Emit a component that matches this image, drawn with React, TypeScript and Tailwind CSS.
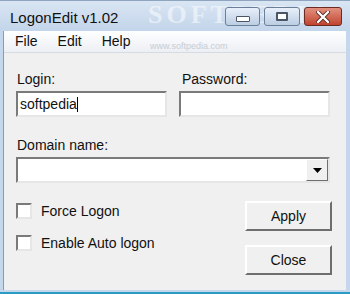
const sunken =
  "border-2 border-t-[#7a7a7a] border-l-[#7a7a7a] border-r-[#e6e6e6] border-b-[#e6e6e6] bg-white";
const raised =
  "border-2 border-t-[#ffffff] border-l-[#ffffff] border-r-[#6e6e6e] border-b-[#6e6e6e] bg-[#f0f0f0]";

const Checkbox = ({ label }: { label: string }) => (
  <div className="flex items-center gap-[9px] h-[16px]">
    <div className={`w-[16px] h-[16px] ${sunken} bg-[#f7f7f7]`} />
    <span>{label}</span>
  </div>
);

const Button = ({ label }: { label: string }) => (
  <div className={`w-[87px] h-[30px] flex items-center justify-center ${raised}`}>
    {label}
  </div>
);

export default function App() {
  return (
    <div
      className="relative w-[350px] h-[294px] overflow-hidden flex flex-col bg-[#c5d7ec] text-[14px] text-[#111]"
      style={{ fontFamily: '"Liberation Sans", Arial, sans-serif' }}
    >
      {/* title bar */}
      <div className="relative h-[31px] flex items-start bg-gradient-to-b from-[#d9e5f3] to-[#c3d5ea] border-t border-[#8fa5bf]">
        <span
          className="absolute left-[148px] top-[0px] text-[26px] leading-[28px] tracking-[4px] text-white/50 font-bold"
          style={{ fontFamily: '"Liberation Serif", serif' }}
        >
          SOFTPEDIA
        </span>
        <span className="relative mt-[6px] ml-[10px] text-[15px] text-[#111]">LogonEdit v1.02</span>
        <div className="relative ml-auto mr-[8px] mt-[6px] flex gap-[4px]">
          <div className="w-[35px] h-[19px] rounded-[3px] border border-[#6c7f98] bg-gradient-to-b from-[#e8f0fa] to-[#bccde3] flex items-center justify-center">
            <div className="w-[14px] h-[6px] mt-[5px] bg-white border border-[#4a5566] rounded-[1px]" />
          </div>
          <div className="w-[36px] h-[19px] rounded-[3px] border border-[#6c7f98] bg-gradient-to-b from-[#e8f0fa] to-[#bccde3] flex items-center justify-center">
            <div className="w-[12px] h-[9px] border-[2px] border-[#4a5566] bg-white rounded-[1px]" />
          </div>
          <div className="w-[38px] h-[19px] rounded-[3px] border border-[#6b2a22] bg-gradient-to-b from-[#e2907f] to-[#c0422e] flex items-center justify-center">
            <svg width="14" height="12" viewBox="0 0 14 12">
              <path d="M2 1 L12 11 M12 1 L2 11" stroke="#5a2a22" strokeWidth="4" strokeLinecap="round" />
              <path d="M2 1 L12 11 M12 1 L2 11" stroke="#ffffff" strokeWidth="2.4" strokeLinecap="round" />
            </svg>
          </div>
        </div>
      </div>

      {/* body between frames */}
      <div className="flex-1 flex ml-[3px] mr-[4px] border-l border-[#8a9ab0]">
        <div className="flex-1 flex flex-col bg-[#f0f0f0]">
          {/* menu bar */}
          <div className="relative h-[22px] flex items-center bg-gradient-to-b from-[#ffffff] to-[#eceff4] border-b border-[#d7dce4] pl-[1px]">
            <span className="px-[10px]">File</span>
            <span className="px-[10px]">Edit</span>
            <span className="px-[10px]">Help</span>
            <span className="absolute left-[146px] top-[9px] text-[9px] text-[#c8ccd4]">www.softpedia.com</span>
          </div>

          {/* client */}
          <div className="flex-1 flex flex-col pl-[12px] pr-[14px] pt-[18px]">
            <div className="flex gap-[12px]">
              <div className="flex flex-col gap-[4px]">
                <span className="h-[16px] leading-[16px] ml-[1px]">Login:</span>
                <div className={`w-[151px] h-[26px] ${sunken} flex items-center pl-[2px]`}>
                  <span>softpedia</span>
                  <span className="w-[1px] h-[15px] bg-black" />
                </div>
              </div>
              <div className="flex flex-col gap-[4px]">
                <span className="h-[16px] leading-[16px] ml-[3px]">Password:</span>
                <div className={`w-[151px] h-[26px] ${sunken}`} />
              </div>
            </div>

            <span className="h-[16px] leading-[16px] ml-[1px] mt-[20px]">Domain name:</span>
            <div className={`mt-[4px] w-[314px] h-[26px] ${sunken} flex justify-end`}>
              <div className="w-[22px] h-full border border-t-white border-l-white border-r-[#6e6e6e] border-b-[#6e6e6e] bg-[#f0f0f0] flex items-center justify-center">
                <svg width="9" height="5" viewBox="0 0 9 5">
                  <path d="M0 0 H9 L4.5 5 Z" fill="#000" />
                </svg>
              </div>
            </div>

            <div className="flex">
              <div className="flex flex-col gap-[16px] mt-[20px]">
                <Checkbox label="Force Logon" />
                <Checkbox label="Enable Auto logon" />
              </div>
              <div className="ml-auto flex flex-col gap-[14px] mt-[18px]">
                <Button label="Apply" />
                <Button label="Close" />
              </div>
            </div>
          </div>
        </div>
      </div>

      {/* bottom frame */}
      <div className="h-[4px] bg-[#c5d7ec] border-b-2 border-[#2a9cc4]" />
    </div>
  );
}
